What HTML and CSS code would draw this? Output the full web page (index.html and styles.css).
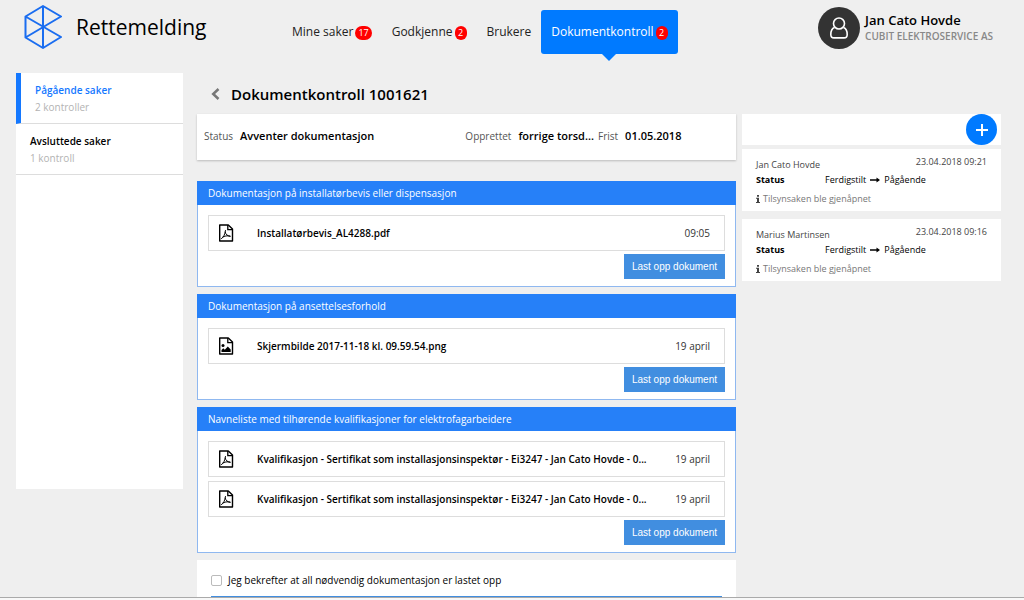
FILE: index.html
```html
<!DOCTYPE html>
<html lang="nb">
<head>
<meta charset="utf-8">
<title>Rettemelding</title>
<link rel="stylesheet" href="styles.css">
</head>
<body>
<svg class="defs" aria-hidden="true">
  <symbol id="pdf" viewBox="0 0 16 18">
    <path d="M1.700 1h8.600L14.500 5v12H1.700z" fill="none" stroke="currentColor" stroke-width="1.400" stroke-linejoin="round"/>
    <path d="M9.800 1v4.600h4.700" fill="none" stroke="currentColor" stroke-width="1.300"/>
    <path d="M3.500 14.600c1.600-.8 3.700-4.300 4-8.100M7.200 8.200c.6 2.200 2.200 3.800 4.900 4.200M4.600 13.200c2-1.300 4.400-1.700 7.400-1.200" fill="none" stroke="currentColor" stroke-width="1" stroke-linecap="round"/>
  </symbol>
  <symbol id="image" viewBox="0 0 16 18">
    <path d="M1.700 1h8.600L14.500 5v12H1.700z" fill="none" stroke="currentColor" stroke-width="1.400" stroke-linejoin="round"/>
    <path d="M9.800 1v4.600h4.700" fill="none" stroke="currentColor" stroke-width="1.300"/>
    <circle cx="5" cy="8.500" r="1.500" fill="currentColor"/>
    <path d="M3.500 15v-2l1.800-1.800 1.500 1.500 3-3.200 2.900 2.900V15z" fill="currentColor"/>
  </symbol>
  <symbol id="arrow" viewBox="0 0 10 6">
    <path d="M0 3h8" stroke="currentColor" stroke-width="1.500"/>
    <path d="M6.500 .5L10 3 6.500 5.500z" fill="currentColor"/>
  </symbol>
  <symbol id="info" viewBox="0 0 4 8">
    <path d="M1 0h2v1.700H1zM0 2.800h3V7h1v1H0V7h1V3.800H0z" fill="currentColor"/>
  </symbol>
</svg>
<div class="page">
  <header class="header">
    <div class="brand">
      <svg class="logo" viewBox="0 0 38 44" aria-hidden="true">
        <path d="M19 1v42M1.500 11.500L37 32 19 43 1.500 32.500v-21L19 1l18 10.500L1.500 32.500" fill="none" stroke="#1a6df0" stroke-width="2" stroke-linejoin="round"/>
      </svg>
      <span class="brand-name">Rettemelding</span>
    </div>
    <nav class="nav">
      <a class="nav-link" href="#">Mine saker <span class="badge">17</span></a>
      <a class="nav-link" href="#">Godkjenne <span class="badge">2</span></a>
      <a class="nav-link" href="#">Brukere</a>
      <a class="nav-link active" href="#" aria-current="page">Dokumentkontroll <span class="badge">2</span></a>
    </nav>
    <div class="user">
      <span class="avatar">
        <svg width="20" height="24" viewBox="0 0 20 24" fill="none" stroke="#fff" stroke-width="1.600" aria-hidden="true">
          <circle cx="10" cy="7.500" r="5.500"/>
          <path d="M5.500 11.500C3 12.500 1.800 15 1.800 18.500c0 2.400 1.300 3.400 3.200 3.400h10c1.900 0 3.200-1 3.200-3.400 0-3.500-1.200-6-3.700-7"/>
        </svg>
      </span>
      <div>
        <div class="user-name">Jan Cato Hovde</div>
        <div class="company">CUBIT ELEKTROSERVICE AS</div>
      </div>
    </div>
  </header>

  <div class="columns">
    <aside class="sidebar">
      <a class="side-item current" href="#"><span class="side-title">Pågående saker</span><span class="side-count">2 kontroller</span></a>
      <a class="side-item" href="#"><span class="side-title">Avsluttede saker</span><span class="side-count">1 kontroll</span></a>
    </aside>

    <main class="main">
      <div class="heading">
        <button class="back" type="button" aria-label="Tilbake">
          <svg width="9" height="12" viewBox="0 0 9 12" aria-hidden="true"><path d="M7.500 1L2.200 6l5.300 5" fill="none" stroke="#777" stroke-width="2.500"/></svg>
        </button>
        <h1 class="title">Dokumentkontroll 1001621</h1>
      </div>

      <dl class="summary">
        <div class="fact wide"><dt>Status</dt><dd>Avventer dokumentasjon</dd></div>
        <div class="fact created"><dt>Opprettet</dt><dd>forrige torsd...</dd></div>
        <div class="fact due"><dt>Frist</dt><dd>01.05.2018</dd></div>
      </dl>

      <section class="panel">
        <h2 class="panel-title">Dokumentasjon på installatørbevis eller dispensasjon</h2>
        <div class="panel-body">
          <div class="file"><svg class="file-icon" aria-hidden="true"><use href="#pdf"/></svg><span class="file-name">Installatørbevis_AL4288.pdf</span><time class="file-date">09:05</time></div>
          <button class="upload" type="button">Last opp dokument</button>
        </div>
      </section>

      <section class="panel">
        <h2 class="panel-title">Dokumentasjon på ansettelsesforhold</h2>
        <div class="panel-body">
          <div class="file"><svg class="file-icon" aria-hidden="true"><use href="#image"/></svg><span class="file-name">Skjermbilde 2017-11-18 kl. 09.59.54.png</span><time class="file-date">19 april</time></div>
          <button class="upload" type="button">Last opp dokument</button>
        </div>
      </section>

      <section class="panel">
        <h2 class="panel-title">Navneliste med tilhørende kvalifikasjoner for elektrofagarbeidere</h2>
        <div class="panel-body">
          <div class="file"><svg class="file-icon" aria-hidden="true"><use href="#pdf"/></svg><span class="file-name">Kvalifikasjon - Sertifikat som installasjonsinspektør - Ei3247 - Jan Cato Hovde - 0...</span><time class="file-date">19 april</time></div>
          <div class="file"><svg class="file-icon" aria-hidden="true"><use href="#pdf"/></svg><span class="file-name">Kvalifikasjon - Sertifikat som installasjonsinspektør - Ei3247 - Jan Cato Hovde - 0...</span><time class="file-date">19 april</time></div>
          <button class="upload" type="button">Last opp dokument</button>
        </div>
      </section>

      <div class="confirm">
        <label class="confirm-label"><input class="check" type="checkbox">Jeg bekrefter at all nødvendig dokumentasjon er lastet opp</label>
        <div class="confirm-bar"></div>
      </div>
    </main>

    <aside class="log">
      <div class="log-add">
        <button class="add" type="button" aria-label="Legg til">
          <svg width="14" height="14" viewBox="0 0 14 14" aria-hidden="true"><path d="M7 1v12M1 7h12" stroke="#fff" stroke-width="2"/></svg>
        </button>
      </div>
      <article class="entry">
        <div class="entry-head"><span class="author">Jan Cato Hovde</span><time class="stamp">23.04.2018 09:21</time></div>
        <div class="change"><b class="change-label">Status</b><span>Ferdigstilt</span><svg class="arrow" aria-hidden="true"><use href="#arrow"/></svg><span>Pågående</span></div>
        <div class="note"><svg class="info" aria-hidden="true"><use href="#info"/></svg>Tilsynsaken ble gjenåpnet</div>
      </article>
      <article class="entry">
        <div class="entry-head"><span class="author">Marius Martinsen</span><time class="stamp">23.04.2018 09:16</time></div>
        <div class="change"><b class="change-label">Status</b><span>Ferdigstilt</span><svg class="arrow" aria-hidden="true"><use href="#arrow"/></svg><span>Pågående</span></div>
        <div class="note"><svg class="info" aria-hidden="true"><use href="#info"/></svg>Tilsynsaken ble gjenåpnet</div>
      </article>
    </aside>
  </div>
</div>
</body>
</html>
```
FILE: styles.css
```css
* { box-sizing: border-box; }
body {
  margin: 0;
  background: #efefef;
  color: #000;
  font: 10px/16px "Open Sans", "Noto Sans", sans-serif;
}
a { color: inherit; text-decoration: none; }
button { font: inherit; border: 0; padding: 0; cursor: pointer; }
h1, h2, dl, dd { margin: 0; }
.defs { display: none; }
.page {
  height: 100vh;
  display: flex;
  flex-direction: column;
  overflow: hidden;
  border-bottom: 2px solid #f8f8f8;
}

/* Header */
.header {
  display: grid;
  grid-template-columns: 258px auto 1fr;
  flex: none;
  height: 73px;
  padding: 0 31px 0 24px;
}
.brand { display: flex; align-items: center; gap: 14px; height: 54px; }
.logo { width: 38px; height: 44px; }
.brand-name { font-size: 21px; line-height: 30px; }
.nav { display: flex; padding-top: 10px; }
.nav-link {
  display: flex;
  align-items: center;
  gap: 2px;
  height: 44px;
  padding: 0 10px;
  font-size: 12px;
  color: #222;
}
.nav-link.active {
  position: relative;
  background: #007aff;
  border-radius: 3px;
  color: #fff;
}
.nav-link.active::after {
  content: "";
  position: absolute;
  top: 100%;
  left: 50%;
  margin-left: -7px;
  border: 7px solid transparent;
  border-top-color: #007aff;
  border-bottom: 0;
}
.badge {
  min-width: 12px;
  margin-top: 2px;
  padding: 0 3px;
  border-radius: 7px;
  background: #f00;
  color: #fff;
  font-size: 9px;
  line-height: 14px;
  text-align: center;
}
.user { display: flex; justify-content: flex-end; gap: 5px; padding-top: 7px; }
.avatar {
  display: flex;
  align-items: center;
  justify-content: center;
  width: 42px;
  height: 42px;
  border-radius: 50%;
  background: #333;
}
.user-name { padding-top: 4px; font-size: 13px; line-height: 18px; font-weight: 600; }
.company { font-size: 10px; line-height: 14px; font-weight: 600; color: #888; }

/* Columns */
.columns {
  display: grid;
  grid-template-columns: 167px minmax(0, 1fr) 259px;
  flex: 1;
  min-height: 0;
  padding: 0 23px 0 16px;
  align-items: start;
  border-bottom: 1px solid #aaa;
  overflow: hidden;
}
.sidebar { min-height: 416px; background: #fff; }
.side-item {
  display: flex;
  flex-direction: column;
  padding: 9px 14px 8px;
  border-bottom: 1px solid #ddd;
}
.side-item.current { border-left: 5px solid #1478ff; color: #1478ff; }
.side-title { line-height: 17px; font-weight: 600; }
.side-count { color: #b3b3b3; }

.main { margin: 0 6px 0 14px; }
.heading { display: flex; align-items: center; gap: 11px; height: 41px; padding-left: 14px; }
.back { display: flex; background: none; }
.title { font-size: 15px; line-height: 24px; font-weight: 600; }
.summary {
  display: flex;
  align-items: center;
  height: 46px;
  margin-bottom: 21px;
  padding: 0 7px 3px;
  background: #fff;
  box-shadow: 0 1px 2px #bbb;
}
.fact { display: flex; align-items: baseline; gap: 7px; white-space: nowrap; }
.fact dt { color: #555; }
.fact dd { font-size: 11px; font-weight: 600; }
.wide { flex: 1; }
.created { margin-right: 4px; }
.due { width: 131px; }

.panel { margin-bottom: 7px; border: 1px solid #8fb8f0; background: #fff; }
.panel-title {
  margin: -1px -1px 0;
  padding: 4px 11px;
  background: #2680f8;
  color: #fff;
  font-size: 10px;
  line-height: 16px;
  font-weight: 400;
}
.panel-body {
  display: flex;
  flex-direction: column;
  gap: 3px;
  padding: 10px 10px 7px;
}
.file {
  display: flex;
  align-items: center;
  height: 36px;
  padding: 0 14px 0 9px;
  border: 1px solid #ddd;
}
.file + .file { margin-top: 1px; }
.file-icon { flex: none; width: 16px; height: 18px; margin-right: 23px; }
.file-name { flex: 1; min-width: 0; font-weight: 600; overflow: hidden; text-overflow: ellipsis; white-space: nowrap; }
.file-date { color: #333; }
.upload {
  align-self: flex-end;
  height: 25px;
  padding: 0 8px;
  background: #418ee0;
  color: #fff;
  font-family: "Liberation Sans", Arial, sans-serif;
}
.confirm { padding: 12px 14px 0; background: #fff; }
.confirm-label { display: flex; align-items: center; gap: 6px; }
.check {
  appearance: none;
  width: 11px;
  height: 11px;
  margin: 0;
  border: 1px solid #bbb;
  border-radius: 2px;
  background: #fff;
}
.check:checked { background: #1478ff; }
.confirm-bar { height: 25px; margin-top: 8px; background: #418ee0; }

/* Log */
.log { margin-top: 41px; }
.log-add {
  display: flex;
  justify-content: flex-end;
  height: 31px;
  margin-bottom: 4px;
  padding-right: 4px;
  background: #fff;
}
.add {
  display: flex;
  align-items: center;
  justify-content: center;
  width: 31px;
  height: 31px;
  border-radius: 50%;
  background: #007aff;
}
.entry { margin-bottom: 8px; padding: 5px 14px 4px; background: #fff; font-size: 9px; }
.entry-head { display: flex; justify-content: space-between; color: #444; line-height: 16px; }
.author { padding-top: 3px; }
.change { display: flex; align-items: center; line-height: 14px; }
.change-label { width: 69px; }
.arrow { width: 10px; height: 6px; margin: 0 4px; }
.note { display: flex; align-items: center; gap: 3px; padding-top: 3px; line-height: 17px; color: #777; }
.info { width: 4px; height: 8px; color: #444; }
```
